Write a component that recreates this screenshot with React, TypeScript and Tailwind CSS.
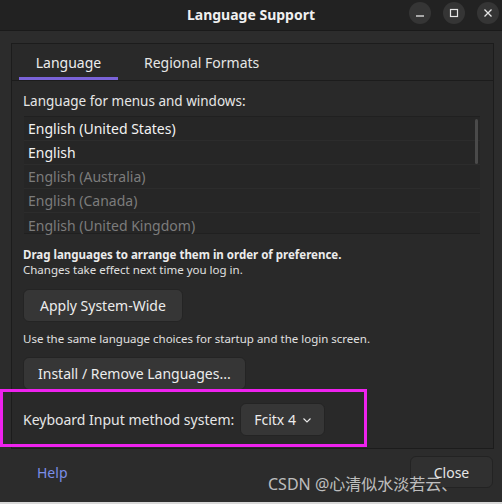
import React from "react";

const languages = [
  { name: "English (United States)", active: true },
  { name: "English", active: true },
  { name: "English (Australia)", active: false },
  { name: "English (Canada)", active: false },
  { name: "English (United Kingdom)", active: false },
];

function WindowButton({ children }: { children: React.ReactNode }) {
  return (
    <div className="w-[22px] h-[22px] rounded-full bg-[#353535] flex items-center justify-center text-[#e6e6e6]">
      {children}
    </div>
  );
}

export default function App() {
  return (
    <div
      className="relative w-[502px] h-[504px] overflow-hidden bg-[#2c2c2c] flex flex-col text-[#e8e8e8]"
      style={{ fontFamily: '"Noto Sans", "Noto Sans CJK SC", sans-serif' }}
    >
      {/* Title bar */}
      <div className="relative h-[31px] shrink-0 bg-[#222222] border-b border-[#1a1a1a] flex items-center justify-center">
        <span className="text-[14px] font-bold text-[#f0f0f0] -mt-[2px]">Language Support</span>
        <div className="absolute right-[3px] top-[2px] flex gap-[12px]">
          <WindowButton>
            <svg width="10" height="10" viewBox="0 0 10 10">
              <path d="M1 8h8" stroke="currentColor" strokeWidth="1.3" />
            </svg>
          </WindowButton>
          <WindowButton>
            <svg width="10" height="10" viewBox="0 0 10 10">
              <rect x="1.5" y="1.5" width="7" height="7" fill="none" stroke="currentColor" strokeWidth="1.2" />
            </svg>
          </WindowButton>
          <WindowButton>
            <svg width="10" height="10" viewBox="0 0 10 10">
              <path d="M1.5 1.5l7 7M8.5 1.5l-7 7" stroke="currentColor" strokeWidth="1.3" />
            </svg>
          </WindowButton>
        </div>
      </div>

      {/* Notebook frame */}
      <div className="mt-[12px] ml-[11px] mr-[8px] h-[406px] border border-[#1c1c1c] bg-[#292929] flex flex-col">
        {/* Tabs */}
        <div className="h-[37px] shrink-0 border-b border-[#1c1c1c] flex items-end pl-[7px]">
          <div className="w-[99px] h-full flex flex-col items-center justify-between">
            <span className="text-[14px] text-[#ececec] mt-[8px]">Language</span>
            <div className="w-full h-[3px] bg-[#7a63d8]" />
          </div>
          <div className="h-full flex items-start pl-[26px]">
            <span className="text-[14px] text-[#e6e6e6] mt-[8px]">Regional Formats</span>
          </div>
        </div>

        {/* Page */}
        <div className="flex-1 flex flex-col pl-[11px] pr-[13px]">
          <div className="text-[13.5px] text-[#e6e6e6] mt-[11px] leading-[18px]">Language for menus and windows:</div>

          <div className="relative mt-[6px] ml-[1px] h-[118px] border-t border-b border-[#202020] bg-[#262626]">
            {languages.map((l, i) => (
              <div
                key={l.name}
                className={`h-[24px] flex items-center pl-[4px] text-[14px] ${
                  i < 4 ? "border-b border-[#2c2c2c]" : ""
                } ${l.active ? "text-[#f2f2f2]" : "text-[#7c7c7c]"}`}
              >
                {l.name}
              </div>
            ))}
            <div className="absolute right-[2px] top-[2px] w-[3px] h-[45px] rounded-full bg-[#4a4a4a]" />
          </div>

          <div className="mt-[13px] text-[11.5px] leading-[15px] font-bold text-[#ececec]">
            Drag languages to arrange them in order of preference.
          </div>
          <div className="text-[11.5px] leading-[15px] text-[#e0e0e0]">Changes take effect next time you log in.</div>

          <button className="mt-[12px] self-start h-[33px] px-[16px] rounded-[6px] bg-[#363636] border border-[#242424] text-[14px] text-[#ececec]">
            Apply System-Wide
          </button>

          <div className="mt-[9px] text-[11.5px] leading-[15px] text-[#e0e0e0]">
            Use the same language choices for startup and the login screen.
          </div>

          <button className="mt-[11px] self-start h-[33px] px-[14px] rounded-[6px] bg-[#363636] border border-[#242424] text-[14px] text-[#ececec]">
            Install / Remove Languages...
          </button>

          <div className="mt-[13px] flex items-center gap-[6px]">
            <span className="text-[14px] text-[#e6e6e6]">Keyboard Input method system:</span>
            <button className="h-[33px] pl-[13px] pr-[12px] rounded-[6px] bg-[#363636] border border-[#242424] flex items-center gap-[6px] text-[14px] text-[#ececec]">
              Fcitx 4
              <svg width="10" height="10" viewBox="0 0 10 10">
                <path d="M1.5 3.5L5 7l3.5-3.5" fill="none" stroke="currentColor" strokeWidth="1.1" />
              </svg>
            </button>
          </div>
        </div>
      </div>

      {/* Footer */}
      <div className="flex-1 flex items-start justify-between pl-[37px] pr-[9px] pt-[7px]">
        <span className="mt-[6px] text-[14px] text-[#7b8ee8]">Help</span>
        <button className="w-[83px] h-[32px] rounded-[6px] bg-[#303030] border border-[#232323] text-[14px] text-[#e6e6e6]">
          Close
        </button>
      </div>
      <div className="h-[2px] shrink-0 bg-[#d8d8d8]" />

      {/* Annotation box */}
      <div className="absolute left-0 top-[389px] w-[367px] h-[58px] border-[3px] border-[#ee22ee] pointer-events-none" />

      {/* Watermark */}
      <div className="absolute left-[268px] top-[472px] text-[16px] text-white/70 whitespace-nowrap pointer-events-none">
        CSDN @心清似水淡若云、
      </div>
    </div>
  );
}
